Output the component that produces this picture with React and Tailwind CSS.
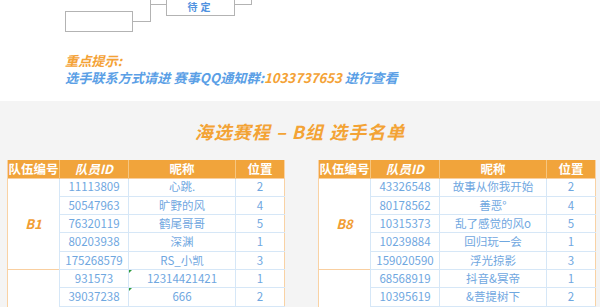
const groups = {
  left: [
    {
      team: "B1",
      rows: [
        ["11113809", "心跳.", "2"],
        ["50547963", "旷野的风", "4"],
        ["76320119", "鹤尾哥哥", "5"],
        ["80203938", "深渊", "1"],
        ["175268579", "RS_小凯", "3"],
      ],
    },
    {
      team: "",
      flag: true,
      rows: [
        ["931573", "12314421421", "1"],
        ["39037238", "666", "2"],
        ["", "", ""],
        ["", "", ""],
        ["", "", ""],
      ],
    },
  ],
  right: [
    {
      team: "B8",
      rows: [
        ["43326548", "故事从你我开始", "2"],
        ["80178562", "善恶°", "4"],
        ["10315373", "乱了感觉的风o", "5"],
        ["10239884", "回归玩一会", "1"],
        ["159020590", "浮光掠影", "3"],
      ],
    },
    {
      team: "",
      rows: [
        ["68568919", "抖音&冥帝", "1"],
        ["10395619", "&菩提树下", "2"],
        ["", "", ""],
        ["", "", ""],
        ["", "", ""],
      ],
    },
  ],
};

function PlayerTable({ data }) {
  return (
    <table className="w-[277px] table-fixed border-collapse border-x border-[#f9d2a4] bg-white">
      <colgroup>
        <col className="w-[52px]" />
        <col className="w-[69px]" />
        <col className="w-[107px]" />
        <col className="w-[49px]" />
      </colgroup>
      <thead>
        <tr className="h-[18px] bg-[#f1a43b] text-[12.5px] font-bold text-white">
          <th className="border-r border-[#f6c680] p-0 font-bold leading-none">队伍编号</th>
          <th className="border-r border-[#f6c680] p-0 font-bold italic leading-none">队员ID</th>
          <th className="border-r border-[#f6c680] p-0 font-bold leading-none">昵称</th>
          <th className="p-0 font-bold leading-none">位置</th>
        </tr>
      </thead>
      <tbody className="text-[11.5px] text-[#6fa7df]">
        {data.map((g, gi) =>
          g.rows.map((r, i) => (
            <tr
              key={gi + "-" + i}
              className={`h-[18.33px] ${i === 0 ? "border-t border-[#f9cfa0]" : ""}`}
            >
              {i === 0 && (
                <td
                  rowSpan={5}
                  className="border-r border-[#d6e7f7] p-0 text-center text-[13px] font-bold italic text-[#f19d33]"
                >
                  {g.team}
                </td>
              )}
              <td className="border-b border-r border-[#d6e7f7] p-0 text-center leading-none">{r[0]}</td>
              <td className="relative border-b border-r border-[#d6e7f7] p-0 text-center leading-none">
                {g.flag && i < 2 && (
                  <span className="absolute left-0 top-0 h-0 w-0 border-r-[3px] border-t-[3px] border-r-transparent border-t-[#2e9b3e]" />
                )}
                {r[1]}
              </td>
              <td className="border-b border-[#d6e7f7] p-0 text-center leading-none">{r[2]}</td>
            </tr>
          ))
        )}
      </tbody>
    </table>
  );
}

export default function App() {
  return (
    <div
      className="h-[307px] w-[600px] overflow-hidden bg-white"
      style={{ fontFamily: '"Noto Sans CJK SC", "Noto Sans", sans-serif' }}
    >
      {/* top: bracket fragment + contact hint */}
      <div className="h-[101px] bg-white">
        <div className="relative h-[32px]">
          <div className="absolute left-[65px] top-[11px] h-[21px] w-[68px] border border-[#b3b3b3]" />
          <div className="absolute left-[133px] top-[21px] h-px w-[17px] bg-[#b3b3b3]" />
          <div className="absolute left-[150px] top-0 h-[22px] w-px bg-[#b3b3b3]" />
          <div className="absolute left-[150px] top-[4px] h-px w-[17px] bg-[#b3b3b3]" />
          <div className="absolute left-[166px] top-[-2px] flex h-[18px] w-[69px] items-center justify-center border border-[#b3b3b3] text-[10px] font-bold leading-none tracking-[3px] text-[#4f92e0]">
            待定
          </div>
          <div className="absolute left-[234px] top-[4px] h-px w-[17px] bg-[#b3b3b3]" />
          <div className="absolute left-[251px] top-0 h-[5px] w-px bg-[#b3b3b3]" />
        </div>
        <div className="pl-[65px] pt-[20px] text-[13.2px] font-bold italic leading-[17px]">
          <p className="text-[#f4a236]">重点提示:</p>
          <p className="text-[#5b9fe6]">
            选手联系方式请进 赛事QQ通知群:<span className="text-[#f4a236]">1033737653</span> 进行查看
          </p>
        </div>
      </div>

      {/* group B list */}
      <div className="h-[206px] bg-[#f4f4f4]">
        <h2 className="pt-[19px] text-center text-[18px] font-bold italic leading-[22px] tracking-[1px] text-[#f3a335]">
          海选赛程 – B组 选手名单
        </h2>
        <div className="mt-[18px] flex gap-[33px] pl-[7px]">
          <PlayerTable data={groups.left} />
          <PlayerTable data={groups.right} />
        </div>
      </div>
    </div>
  );
}
